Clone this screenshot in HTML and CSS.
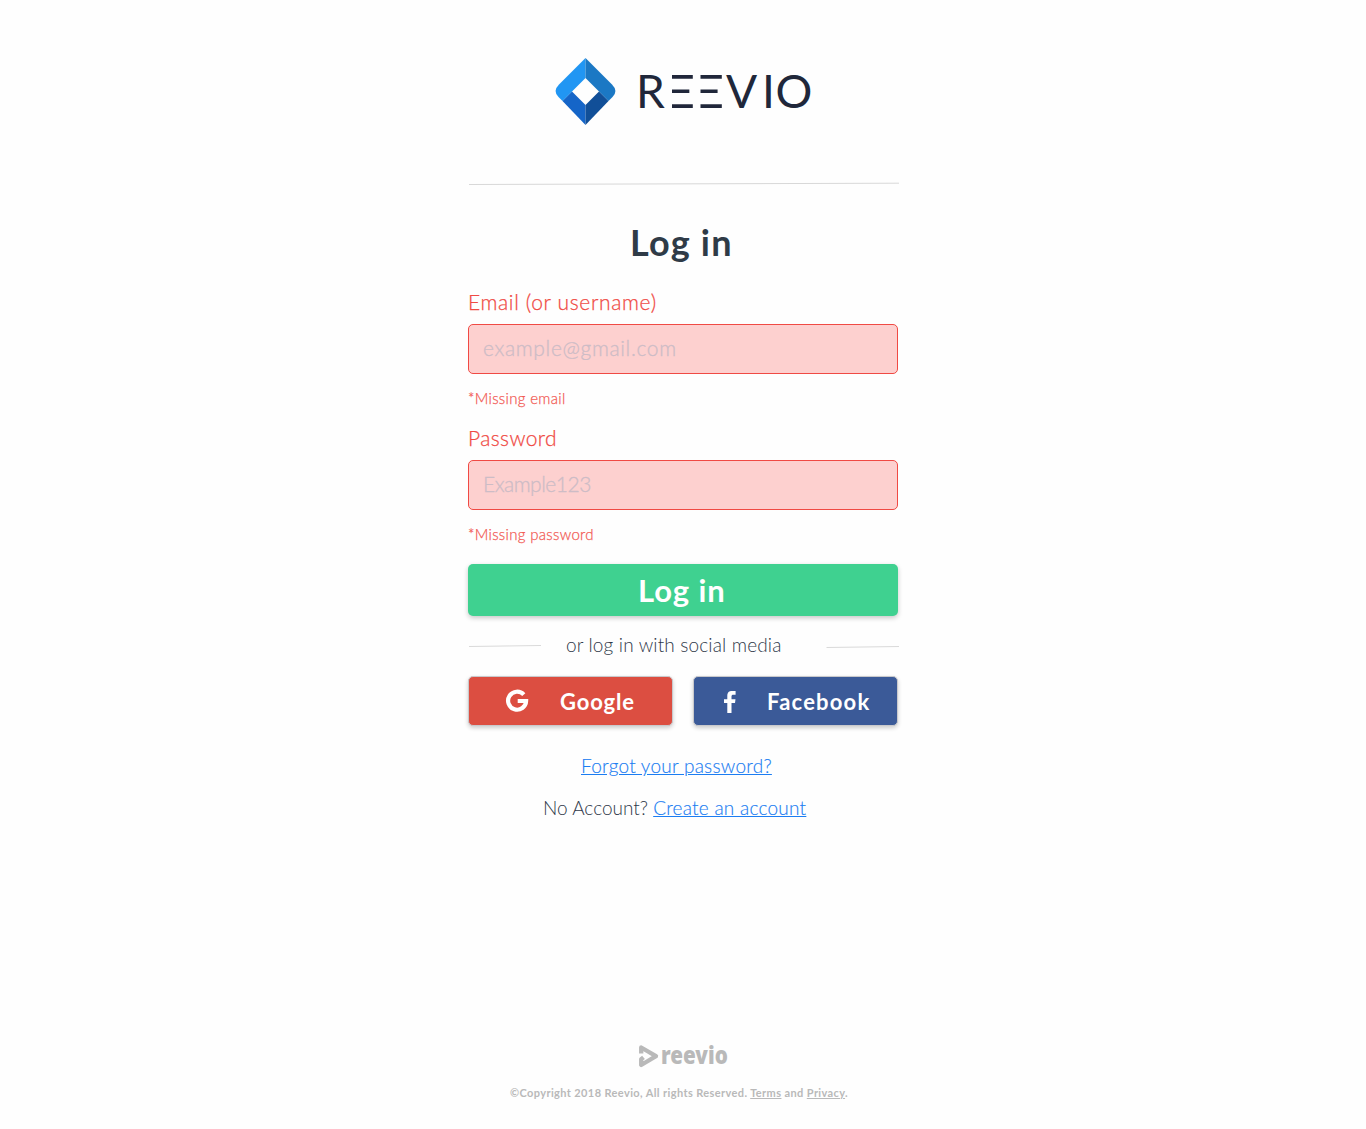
FILE: index.html
```html
<!DOCTYPE html>
<html lang="en">
<head>
<meta charset="utf-8">
<title>Reevio - Log in</title>
<link rel="stylesheet" href="styles.css">
</head>
<body>
<main class="login">
  <header class="brand">
    <svg class="logo" viewBox="0 0 260 72" role="img" aria-label="Reevio">
      <path d="M31.500 3 L5 29.500 Q-1.500 36 4.500 42 L8.500 46 L18 36.500 L31.500 23Z" fill="#2196f3"/>
      <path d="M31.500 3 L58 29.500 Q64.500 36 58.500 42 L54.500 46 L45 36.500 L31.500 23Z" fill="#1b78c4"/>
      <path d="M8.500 46 L18 36.500 L31.500 50 V70Z" fill="#1565c8"/>
      <path d="M54.500 46 L45 36.500 L31.500 50 V70Z" fill="#114f98"/>
      <g class="wordmark">
        <text class="bars" transform="translate(105.300 53) scale(1.4 1)">EE</text>
        <path d="M108 18h10v37h-10z M138.800 18h7.700v37h-7.700z" fill="#fefefe"/>
        <text x="82" y="53">R</text>
        <text x="172" y="53">V</text>
        <text x="208" y="53">I</text>
        <text x="221.500" y="53">O</text>
      </g>
    </svg>
  </header>
  <svg class="rule" viewBox="0 0 430 3"><path d="M1 2.500 L431 1.200" /></svg>
  <h1 class="title"><span>Log in</span></h1>
  <form class="form">
    <label class="label label-email" for="email">Email (or username)</label>
    <input class="input input-email" id="email" type="text" placeholder="example@gmail.com">
    <p class="error error-email">*Missing email</p>
    <label class="label label-password" for="password">Password</label>
    <input class="input input-password" id="password" type="password" placeholder="Example123">
    <p class="error error-password">*Missing password</p>
    <button class="submit" type="button"><span>Log in</span></button>
  </form>
  <div class="divider">
    <svg viewBox="0 0 73 3"><path d="M1 1.500 L73 .500"/></svg>
    <span>or log in with social media</span>
    <svg viewBox="0 0 73 3"><path d="M1.500 2.500 L74 1.500"/></svg>
  </div>
  <div class="social">
    <button class="google" type="button">
      <svg width="24" height="24" viewBox="0 0 24 24"><path d="M18.800 5.700 A9 9 0 1 0 21.100 12 H12.700" fill="none" stroke="#fff" stroke-width="4.200"/></svg>
      <span>Google</span>
    </button>
    <button class="facebook" type="button">
      <svg width="14" height="24" viewBox="0 0 14 24"><path d="M5.300 24V14H2v-3.800h3.300V7C5.300 3.300 7.200 2 10 2h3.600v3.800h-2.300C10 5.800 9.500 6.300 9.500 7.400v2.800h4L13 14H9.500v10z" fill="#fff"/></svg>
      <span>Facebook</span>
    </button>
  </div>
  <p class="forgot"><a href="#">Forgot your password?</a></p>
  <p class="signup"><span>No Account? </span><a href="#">Create an account</a></p>
</main>
<footer class="footer">
  <div class="footer-brand">
    <svg width="20" height="24" viewBox="0 0 20 24"><path d="M2.200 9.500 V3.500 L17 12.200 L2.200 21 V15.200 L4.500 13.300" fill="none" stroke="#b9b9b9" stroke-width="4.300" stroke-linejoin="round"/></svg>
    <span>reevio</span>
  </div>
  <p class="copyright">©Copyright 2018 Reevio, All rights Reserved. <a href="#">Terms</a> and <a href="#">Privacy</a>.</p>
</footer>
</body>
</html>
```
FILE: styles.css
```css
* { box-sizing: border-box; }
body {
  margin: 0;
  min-height: 1129px;
  display: flex;
  flex-direction: column;
  align-items: center;
  background: #fefefe;
  color: #2e3849;
  font-family: Lato, "Liberation Sans", sans-serif;
  font-weight: 300;
}
h1, p { margin: 0; }
span, a { white-space: pre; }
a { color: #1c7df2; letter-spacing: .25px; -webkit-text-stroke: .15px; }
.login { width: 430px; padding-top: 55px; display: flex; flex-direction: column; }
.brand { height: 127px; padding-left: 86px; }
.logo { display: block; width: 260px; height: 72px; overflow: visible; }
.wordmark { font-family: Lato, sans-serif; font-size: 46px; font-weight: 400; fill: #20273a; }
.bars { letter-spacing: -6.340px; }
.rule { height: 3px; width: 430px; stroke: #d8d8d8; overflow: visible; }
.title { margin-top: 33px; height: 50px; line-height: 48px; padding-left: 162px; font-size: 36px; font-weight: 700; letter-spacing: 1.200px; color: #2f3b47; }
.form { display: flex; flex-direction: column; }
.label { margin-top: 20px; height: 30px; line-height: 28px; font-size: 21px; color: #f04a44; letter-spacing: .65px; -webkit-text-stroke: .25px; }
.label-password { margin-top: 15px; letter-spacing: .4px; }
.input {
  margin-top: 6px;
  width: 430px;
  height: 50px;
  padding: 0 14px 3px;
  border: 1px solid #f04a44;
  border-radius: 5px;
  background: #fdd0cf;
  font: 300 21px Lato, sans-serif;
  letter-spacing: .65px;
}
.input-password { letter-spacing: -.5px; }
.input::placeholder { color: #cdbcc6; opacity: 1; -webkit-text-stroke: .3px #cdbcc6; }
.error { margin-top: 15px; height: 20px; line-height: 18px; font-size: 15px; color: #f25b55; letter-spacing: .32px; -webkit-text-stroke: .25px; }
.submit {
  margin-top: 19px;
  height: 52px;
  padding: 0 0 0 170px;
  border: 0;
  border-radius: 5px;
  background: #3fd190;
  box-shadow: 0 2px 5px rgba(0, 0, 0, .22);
  color: #fff;
  font: 700 31px/52px Lato, sans-serif;
  letter-spacing: .9px;
  text-align: left;
}
.divider { display: flex; height: 28px; margin-top: 16px; line-height: 26px; font-size: 19px; letter-spacing: .15px; align-items: flex-start; }
.divider svg { width: 73px; height: 3px; margin-top: 13px; stroke: #dadada; flex: none; overflow: visible; }
.divider span { width: 259px; margin-left: 25px; }
.social { display: flex; margin-top: 16px; gap: 20px; }
.social button {
  width: 205px;
  height: 50px;
  display: flex;
  align-items: center;
  border: 1px solid #c9c9cc;
  border-radius: 5px;
  box-shadow: 0 2px 4px rgba(0, 0, 0, .2);
  color: #fff;
  font: 700 22px Lato, sans-serif;
  padding: 0;
}
.social .google { background: #dc4e41; letter-spacing: .85px; }
.social .facebook { background: #3b5a98; letter-spacing: 1.200px; }
.google svg { margin-left: 36px; margin-right: 31px; }
.facebook svg { margin-left: 28px; margin-right: 31px; }
.forgot, .signup { height: 28px; line-height: 26px; font-size: 19px; }
.forgot { margin-top: 27px; padding-left: 113px; }
.signup { margin-top: 14px; padding-left: 75px; }
.footer { margin-top: auto; width: 430px; height: 88px; color: #b9b9b9; }
.footer-brand { display: flex; align-items: center; height: 30px; padding-left: 171px; gap: 2px; font: 900 24px/26px "Noto Sans", sans-serif; }
.footer-brand span { transform: scaleX(.86); transform-origin: 0 50%; padding-bottom: 3px; }
.copyright { margin-top: 12px; padding-left: 42px; line-height: 20px; font-size: 11px; font-weight: 700; white-space: nowrap; letter-spacing: .39px; }
.copyright a { color: inherit; letter-spacing: inherit; -webkit-text-stroke: 0; }
```
